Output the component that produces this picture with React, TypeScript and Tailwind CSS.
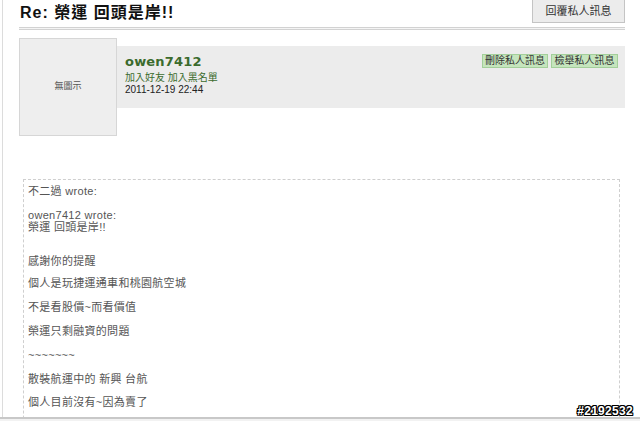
import React from "react";

const font = { fontFamily: '"Liberation Sans", Arial, "Noto Sans CJK TC", sans-serif' };

export default function App() {
  const lines: { t: string; mt: number }[] = [
    { t: "不二過 wrote:", mt: 0 },
    { t: "owen7412 wrote:", mt: 12 },
    { t: "榮運 回頭是岸!!", mt: 0 },
    { t: "感謝你的提醒", mt: 22 },
    { t: "個人是玩捷運通車和桃園航空城", mt: 10 },
    { t: "不是看股價~而看價值", mt: 12 },
    { t: "榮運只剩融資的問題", mt: 12 },
    { t: "~~~~~~~", mt: 12 },
    { t: "散裝航運中的 新興 台航", mt: 12 },
    { t: "個人目前沒有~因為賣了", mt: 11 },
  ];
  return (
    <div
      className="relative w-[640px] h-[421px] overflow-hidden bg-white pl-[2px]"
      style={font}
    >
      <div className="h-full border-l border-[#dcdcdc] pl-[16px] pr-[15px]">
        {/* header */}
        <div className="flex items-start justify-between h-[27px]">
          <div className="pt-[4px] pl-[1px] text-[16px] leading-[18px] font-bold text-[#111] tracking-[1px]">
            Re: 榮運 回頭是岸!!
          </div>
          <button className="w-[93px] h-[23px] bg-[#ececec] border border-[#c4c4c4] border-t-0 text-[11px] text-[#333] leading-[22px]">
            回覆私人訊息
          </button>
        </div>
        <div className="h-[3px] border-t border-b border-[#d2d2d2] bg-[#f4f4f4]" />

        {/* author row */}
        <div className="flex items-start mt-[8px]">
          <div className="w-[98px] h-[98px] bg-[#eeeeee] border border-[#d6d6d6] flex items-center justify-center text-[9px] text-[#555] shrink-0">
            無圖示
          </div>
          <div className="flex-1 h-[62px] mt-[8px] bg-[#ececec] flex justify-between pl-[8px] pr-[7px]">
            <div className="pt-[8px]">
              <div
                className="text-[13px] leading-[16px] font-bold text-[#3b6b2d] tracking-[0.2px]"
                style={{ fontFamily: '"DejaVu Sans", Verdana, sans-serif' }}
              >
                owen7412
              </div>
              <div className="mt-[2px] text-[10px] leading-[12px] text-[#3b6b2d]">
                加入好友&nbsp;加入黑名單
              </div>
              <div className="text-[10px] leading-[12px] text-[#222]">2011-12-19 22:44</div>
            </div>
            <div className="flex gap-[3px] pt-[8px] items-start">
              <span className="h-[14px] w-[66px] bg-[#c5e5bd] border border-[#a3cf9a] text-[10px] leading-[12px] text-[#333] text-center">
                刪除私人訊息
              </span>
              <span className="h-[14px] w-[67px] bg-[#c5e5bd] border border-[#a3cf9a] text-[10px] leading-[12px] text-[#333] text-center">
                檢舉私人訊息
              </span>
            </div>
          </div>
        </div>

        {/* quote */}
        <div className="mt-[43px] ml-[4px] mr-[5px] h-[300px] border border-dashed border-[#cfcfcf] pt-[5px] pl-[4px]">
          {lines.map((l, i) => (
            <div
              key={i}
              className="text-[11px] leading-[12px] text-[#555] tracking-[0.3px]"
              style={{ marginTop: l.mt }}
            >
              {l.t}
            </div>
          ))}
        </div>
      </div>

      {/* bottom edge */}
      <div className="absolute left-0 right-0 top-[417px] h-[2px] bg-[#c8c8c8]" />
      <div className="absolute left-0 right-0 top-[419px] h-[2px] bg-[#f2f2f2]" />

      {/* watermark */}
      <div
        className="absolute right-[7px] top-[405px] text-[12px] leading-[13px] font-bold text-white tracking-[0.3px] [text-shadow:1px_0_0_#000,-1px_0_0_#000,0_1px_0_#000,0_-1px_0_#000,1px_1px_0_#000,-1px_-1px_0_#000,1px_-1px_0_#000,-1px_1px_0_#000]"
        style={{ fontFamily: '"Liberation Sans", Arial, sans-serif' }}
      >
        #2192532
      </div>
    </div>
  );
}
